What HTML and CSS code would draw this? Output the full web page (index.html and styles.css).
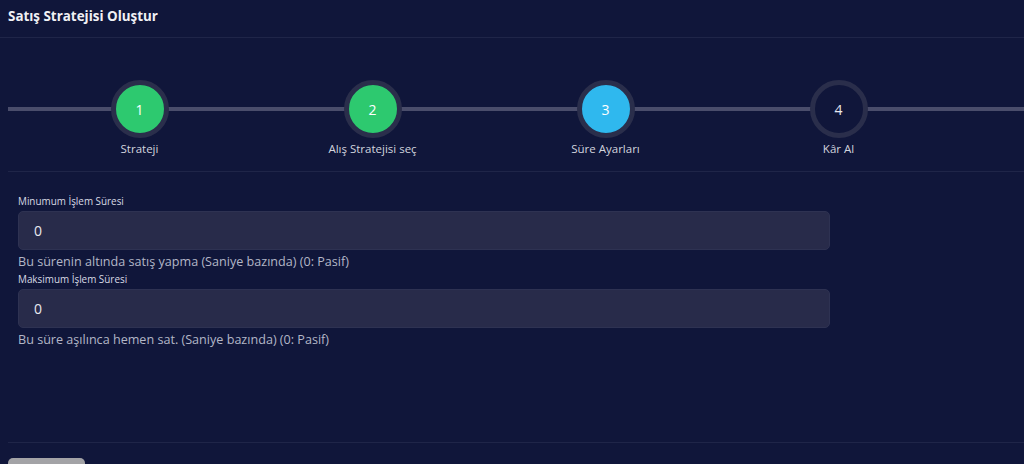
FILE: index.html
```html
<!DOCTYPE html>
<html lang="tr">
<head>
    <meta charset="UTF-8">
    <meta name="viewport" content="width=device-width, initial-scale=1.0">
    <title>Satış Stratejisi Oluştur</title>
    <link rel="stylesheet" href="styles.css">
</head>
<body>
    <div class="page-title">Satış Stratejisi Oluştur</div>

    <div class="wizard">
        <div class="stepper">
            <div class="step done">
                <div class="step-circle">1</div>
                <div class="step-label">Strateji</div>
            </div>
            <div class="step done">
                <div class="step-circle">2</div>
                <div class="step-label">Alış Stratejisi seç</div>
            </div>
            <div class="step active">
                <div class="step-circle">3</div>
                <div class="step-label">Süre Ayarları</div>
            </div>
            <div class="step">
                <div class="step-circle">4</div>
                <div class="step-label">Kâr Al</div>
            </div>
        </div>

        <form class="step-form">
            <label for="minSure">Minumum İşlem Süresi</label>
            <input type="text" id="minSure" name="minSure" value="0">
            <div class="help-text">Bu sürenin altında satış yapma (Saniye bazında) (0: Pasif)</div>

            <label for="maxSure">Maksimum İşlem Süresi</label>
            <input type="text" id="maxSure" name="maxSure" value="0">
            <div class="help-text">Bu süre aşılınca hemen sat. (Saniye bazında) (0: Pasif)</div>
        </form>

        <div class="wizard-footer">
            <button type="button" class="btn-back" aria-label="Geri"></button>
        </div>
    </div>
</body>
</html>
```

FILE: styles.css
```css
body {
    font-family: "Open Sans", "Liberation Sans", sans-serif;
    margin: 0;
    padding: 0;
    background-color: #10163a;
    color: #e4e6ee;
    overflow: hidden;
}

.page-title {
    font-size: 13.4px;
    font-weight: 700;
    line-height: 18px;
    padding: 7px 8px 12px;
    border-bottom: 1px solid #1f2548;
    color: #f0f1f5;
}

.wizard {
    padding-left: 8px;
}

.stepper {
    display: flex;
    padding: 42px 0 15px 15px;
    border-bottom: 1px solid #1f2548;
    background: linear-gradient(#4a4d6b, #4a4d6b) no-repeat 0 69px / 100% 4px;
}

.step {
    width: 233px;
    display: flex;
    flex-direction: column;
    align-items: center;
}

.step-circle {
    width: 48px;
    height: 48px;
    border: 5px solid #2a2e4b;
    border-radius: 50%;
    background-color: #10163a;
    display: flex;
    align-items: center;
    justify-content: center;
    font-size: 14px;
    color: #e8e9f0;
}

.step.done .step-circle {
    background-color: #2dc96f;
    color: #fff;
}

.step.active .step-circle {
    background-color: #2fb8ee;
    color: #fff;
}

.step-label {
    margin-top: 4px;
    font-size: 11.5px;
    line-height: 14px;
    color: #d2d4de;
}

.step-form {
    padding: 23px 0 0 10px;
    height: 271px;
    border-bottom: 1px solid #1f2548;
    box-sizing: border-box;
}

.step-form label {
    display: block;
    font-size: 9.9px;
    font-weight: 500;
    line-height: 12px;
    color: #d8dae4;
    margin-bottom: 4px;
}

.step-form input[type="text"] {
    display: block;
    width: 812px;
    height: 39px;
    padding: 0 15px;
    background-color: #282b4a;
    border: 1px solid #2e3252;
    border-radius: 5px;
    box-sizing: border-box;
    font-family: inherit;
    font-size: 14px;
    color: #e8e9f0;
    outline: none;
}

.help-text {
    margin-top: 4px;
    font-size: 12.6px;
    line-height: 16px;
    color: #b3b6c7;
    margin-bottom: 3px;
}

.wizard-footer {
    padding-top: 15px;
}

.btn-back {
    display: block;
    width: 77px;
    height: 30px;
    background-color: #a3a3a6;
    border: none;
    border-radius: 5px;
}
```
